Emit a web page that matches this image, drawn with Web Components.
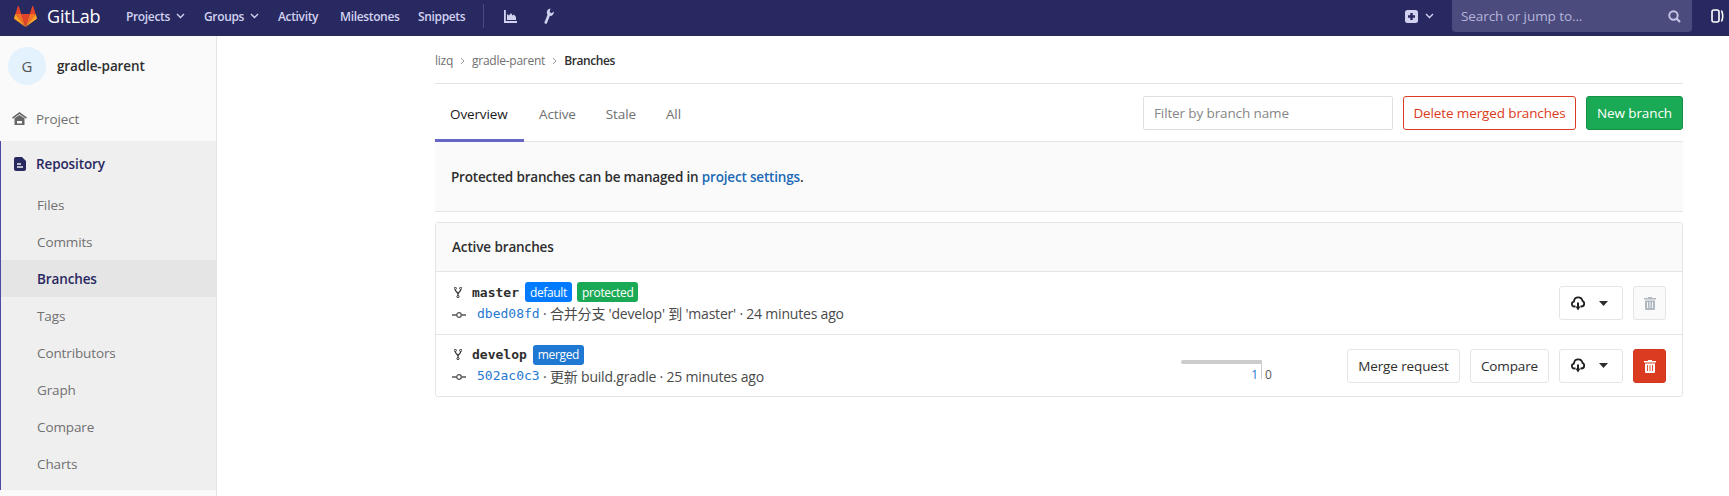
<!DOCTYPE html>
<html lang="en">
<head>
<meta charset="UTF-8">
<title>Branches · gradle-parent</title>
<style>
  html, body { margin: 0; height: 496px; overflow: hidden; background: #fff; }
  body { font: 13.500px "Open Sans", "Noto Sans CJK SC", sans-serif; letter-spacing: -.12px; color: #2e2e2e; }
</style>
</head>
<body>
<gl-page>
  <gl-navbar slot="nav"></gl-navbar>
  <gl-sidebar slot="side"></gl-sidebar>
  <gl-crumbs></gl-crumbs>
  <gl-tabs></gl-tabs>
  <gl-info>Protected branches can be managed in <a>project settings</a>.</gl-info>
  <gl-card>
    <span slot="title">Active branches</span>
    <gl-branch name="master" sha="dbed08fd" msg="合并分支 'develop' 到 'master' · 24 minutes ago">
      <gl-badge slot="badges" color="#007bff">default</gl-badge>
      <gl-badge slot="badges" color="#1aaa55">protected</gl-badge>
      <gl-button slot="actions" kind="cloud"></gl-button>
      <gl-button slot="actions" kind="trash-off"></gl-button>
    </gl-branch>
    <gl-branch name="develop" sha="502ac0c3" msg="更新 build.gradle · 25 minutes ago">
      <gl-badge slot="badges" color="#1f78d1">merged</gl-badge>
      <gl-diverge slot="graph"></gl-diverge>
      <gl-button slot="actions" style="width:113px">Merge request</gl-button>
      <gl-button slot="actions" style="width:79px">Compare</gl-button>
      <gl-button slot="actions" kind="cloud"></gl-button>
      <gl-button slot="actions" kind="trash"></gl-button>
    </gl-branch>
  </gl-card>
</gl-page>

<script>
  // shared icon markup
  const icons = {
    chev: '<svg width="9" height="6" viewBox="0 0 9 6"><path d="M1 1l3.500 3.500L8 1" fill="none" stroke="currentColor" stroke-width="1.400"/></svg>',
    cloud: '<svg width="14" height="15" viewBox="0 0 14 15"><path d="M4.500 10.500H3.300C1.800 10.500.9 9.400.9 8.100c0-1.300.9-2.300 2-2.500C3.100 3 5 1.300 7.200 1.300c2.200 0 3.900 1.500 4.300 3.500 1 .4 1.700 1.500 1.700 2.700 0 1.600-1.200 3-2.900 3H9.500" fill="none" stroke="#1f1f1f" stroke-width="1.800"/><path d="M7 6.500v5" stroke="#1f1f1f" stroke-width="2"/><path d="M4.500 10.500h5L7 14.500z" fill="#1f1f1f"/></svg>',
    caret: '<svg width="9" height="5" viewBox="0 0 9 5"><path d="M0 0h9L4.500 5z" fill="#2e2e2e"/></svg>',
    trash: '<svg width="12" height="14" viewBox="0 0 12 14"><path d="M4 2V1h4v1h4v1.500H0V2z" fill="currentColor"/><path d="M1 4.500h10V13a1 1 0 0 1-1 1H2a1 1 0 0 1-1-1z" fill="currentColor"/><path d="M3.500 6v6M6 6v6M8.500 6v6" stroke="var(--cut)" stroke-width=".9"/></svg>'
  };

  class GlPage extends HTMLElement {
    connectedCallback() {
      this.attachShadow({ mode: 'open' }).innerHTML = `
        <style>
          :host { display: block; height: 496px; }
          .body { display: flex; height: 460px; }
          main { flex: 1; min-width: 0; padding: 0 46px 0 218px; }
        </style>
        <slot name="nav"></slot>
        <div class="body">
          <slot name="side"></slot>
          <main><slot></slot></main>
        </div>`;
    }
  }

  class GlNavbar extends HTMLElement {
    connectedCallback() {
      this.attachShadow({ mode: 'open' }).innerHTML = `
        <style>
          :host { display: flex; align-items: center; box-sizing: border-box; height: 36px; padding-bottom: 4px;
                  background: #292961; color: #d1d1f0; font: 600 12px "Open Sans", sans-serif; letter-spacing: -.35px; }
          .logo { display: flex; align-items: center; margin-left: 14px; width: 112px; color: #fff;
                  font: 400 18px "Open Sans", sans-serif; letter-spacing: -.2px; gap: 10px; }
          .items { display: flex; align-items: center; }
          a { display: flex; align-items: center; gap: 6px; white-space: nowrap; }
          .sep { width: 1px; height: 24px; background: #4a4a82; }
          .grow { flex: 1; }
          .search { display: flex; align-items: center; justify-content: space-between; box-sizing: border-box;
                    width: 240px; height: 32px; padding: 0 11px 0 9px; background: #4b4b7d;
                    border-radius: 0 0 4px 4px; color: #b5b5dc; font: 400 13.500px "Open Sans", sans-serif; letter-spacing: -.08px; }
          .ext { display: flex; margin: 0 5px 0 19px; }
        </style>
        <div class="logo">
          <svg width="23" height="23" viewBox="0 0 36 36">
            <path d="M18 34.500L24.600 14.200H11.400z" fill="#e24329"/>
            <path d="M18 34.500L11.400 14.200H2.100z" fill="#fc6d26"/>
            <path d="M2.100 14.200L.1 20.400c-.2.6 0 1.200.5 1.500L18 34.500z" fill="#fca326"/>
            <path d="M2.100 14.200h9.300L7.400 2c-.2-.6-1.100-.6-1.300 0z" fill="#e24329"/>
            <path d="M18 34.500l6.600-20.300h9.300z" fill="#fc6d26"/>
            <path d="M33.900 14.200l2 6.200c.2.6 0 1.200-.5 1.500L18 34.500z" fill="#fca326"/>
            <path d="M33.900 14.200h-9.300L28.600 2c.2-.6 1.100-.6 1.300 0z" fill="#e24329"/>
          </svg>
          <span>GitLab</span>
        </div>
        <div class="items">
          <a style="width:78px">Projects ${icons.chev}</a>
          <a style="width:74px">Groups ${icons.chev}</a>
          <a style="width:62px">Activity</a>
          <a style="width:78px">Milestones</a>
          <a style="width:65px">Snippets</a>
          <div class="sep"></div>
          <svg style="margin-left:20px" width="13" height="13" viewBox="0 0 13 13"><path d="M0 0h1.800v11H13v2H0z" fill="#d1d1f0"/><path d="M3 10V4l2 1.500L7 3l1.500 2.500L10 4.500 12 7v3z" fill="#d1d1f0"/></svg>
          <svg style="margin-left:26px" width="12" height="16" viewBox="0 0 12 16"><path d="M7.500.5C5 .7 3.600 2.600 3.800 4.800c.1 1 .5 1.800 1.200 2.500l3.200.6c1.700-.6 2.800-2.300 2.700-4.300L8.500 5.200 6.600 4z" fill="#d1d1f0"/><path d="M2.800 14.500L5.800 7" stroke="#d1d1f0" stroke-width="2.600" stroke-linecap="round"/></svg>
        </div>
        <div class="grow"></div>
        <svg width="13" height="13" viewBox="0 0 13 13"><rect width="13" height="13" rx="2.500" fill="#d1d1f0"/><path d="M6.500 3v7M3 6.500h7" stroke="#292961" stroke-width="2.400"/></svg>
        <span style="display:flex;margin:0 18px 0 7px">${icons.chev}</span>
        <div class="search">
          <span>Search or jump to...</span>
          <svg width="13" height="13" viewBox="0 0 13 13"><circle cx="5.500" cy="5.500" r="4.200" fill="none" stroke="#c4c4e6" stroke-width="2"/><path d="M8.500 8.500l3.500 3.500" stroke="#c4c4e6" stroke-width="2.200"/></svg>
        </div>
        <div class="ext">
          <svg width="13" height="14" viewBox="0 0 13 14"><rect x="1" y="1" width="7" height="12" rx="2" fill="none" stroke="#fff" stroke-width="1.600"/><path d="M10.500 1.500c1.600 3.500 1.600 7.500 0 11" fill="none" stroke="#fff" stroke-width="1.600"/></svg>
        </div>`;
    }
  }

  class GlSideItem extends HTMLElement {
    connectedCallback() {
      this.attachShadow({ mode: 'open' }).innerHTML = `
        <style>
          :host { display: flex; align-items: center; height: 37px; padding-left: 36px; color: #707070; }
          :host([active]) { background: #e5e5e5; color: #292961; font-weight: 600; }
        </style>
        <slot></slot>`;
    }
  }

  class GlSidebar extends HTMLElement {
    connectedCallback() {
      this.attachShadow({ mode: 'open' }).innerHTML = `
        <style>
          :host { display: block; box-sizing: border-box; flex: none; width: 217px; height: 460px;
                  background: #fafafa; border-right: 1px solid #e5e5e5; }
          .head { display: flex; align-items: flex-start; gap: 11px; height: 63px; padding: 11px 0 0 8px; box-sizing: border-box; }
          .avatar { display: flex; align-items: center; justify-content: center; width: 38px; height: 38px;
                    border-radius: 50%; background: #e3f2fd; color: #555; font-size: 15px; }
          .name { font-weight: 600; color: #2e2e2e; line-height: 38px; }
          .project { display: flex; align-items: center; gap: 9px; height: 42px; padding: 0 0 3px 12px; box-sizing: border-box; color: #707070; }
          .repo { background: #efefef; border-left: 1px solid #4b4ba3; height: 349px; box-sizing: border-box; }
          .title { display: flex; align-items: center; gap: 10px; height: 45px; padding-left: 13px; color: #292961; font-weight: 600; }
        </style>
        <div class="head"><div class="avatar">G</div><div class="name">gradle-parent</div></div>
        <div class="project">
          <svg width="15" height="13" viewBox="0 0 15 13"><path d="M7.500 0L15 5.500l-1 1.200-6.500-4.800L1 6.700 0 5.500z" fill="#666"/><path d="M2.500 6.300L7.500 3l5 3.300V13h-10zM5 9v2.500h5V9z" fill="#666" fill-rule="evenodd"/></svg>
          <span>Project</span>
        </div>
        <div class="repo">
          <div class="title">
            <svg width="12" height="14" viewBox="0 0 12 14"><path d="M2 0h6l4 4v8a2 2 0 0 1-2 2H2a2 2 0 0 1-2-2V2a2 2 0 0 1 2-2z" fill="#292961"/><path d="M3 7h4M3 10h6" stroke="#efefef" stroke-width="1.300"/></svg>
            <span>Repository</span>
          </div>
          <gl-side-item>Files</gl-side-item>
          <gl-side-item>Commits</gl-side-item>
          <gl-side-item active>Branches</gl-side-item>
          <gl-side-item>Tags</gl-side-item>
          <gl-side-item>Contributors</gl-side-item>
          <gl-side-item>Graph</gl-side-item>
          <gl-side-item>Compare</gl-side-item>
          <gl-side-item>Charts</gl-side-item>
        </div>`;
    }
  }

  class GlCrumbs extends HTMLElement {
    connectedCallback() {
      const gt = '<svg width="5" height="8" viewBox="0 0 5 8"><path d="M1 1l3 3-3 3" fill="none" stroke="#999" stroke-width="1"/></svg>';
      this.attachShadow({ mode: 'open' }).innerHTML = `
        <style>
          :host { display: flex; align-items: center; gap: 7px; height: 48px; padding-top: 2px; box-sizing: border-box;
                  border-bottom: 1px solid #e5e5e5; font-size: 12px; letter-spacing: -.25px; color: #707070; }
          b { font-weight: 600; color: #2e2e2e; letter-spacing: -.4px; }
        </style>
        <span>lizq</span>${gt}<span>gradle-parent</span>${gt}<b>Branches</b>`;
    }
  }

  class GlTabs extends HTMLElement {
    connectedCallback() {
      this.attachShadow({ mode: 'open' }).innerHTML = `
        <style>
          :host { display: flex; align-items: stretch; height: 58px; box-sizing: border-box; border-bottom: 1px solid #e5e5e5; }
          a { display: flex; align-items: center; padding: 2px 15px 0; color: #707070; margin-bottom: -1px; }
          a.on { color: #1a1a1a; font-weight: 500; width: 59px; border-bottom: 3px solid #6666c4; padding-top: 5px; box-sizing: content-box; }
          .grow { flex: 1; }
          .tools { display: flex; align-items: center; gap: 10px; }
          .filter { box-sizing: border-box; width: 250px; height: 34px; display: flex; align-items: center; padding-left: 10px;
                    border: 1px solid #dfdfdf; border-radius: 2px; color: #868686; }
        </style>
        <a class="on">Overview</a><a>Active</a><a>Stale</a><a>All</a>
        <div class="grow"></div>
        <div class="tools">
          <div class="filter">Filter by branch name</div>
          <gl-button kind="danger" style="width:173px">Delete merged branches</gl-button>
          <gl-button kind="success" style="width:97px">New branch</gl-button>
        </div>`;
    }
  }

  class GlInfo extends HTMLElement {
    connectedCallback() {
      this.attachShadow({ mode: 'open' }).innerHTML = `
        <style>
          :host { display: flex; align-items: center; height: 69px; padding-left: 16px; background: #fafafa; letter-spacing: -.18px;
                  border-bottom: 1px solid #e5e5e5; font-weight: 600; color: #2e2e2e; margin-bottom: 10px; }
          ::slotted(a) { color: #1b69b6; }
        </style>
        <div><slot></slot></div>`;
    }
  }

  class GlCard extends HTMLElement {
    connectedCallback() {
      this.attachShadow({ mode: 'open' }).innerHTML = `
        <style>
          :host { display: block; border: 1px solid #e5e5e5; border-radius: 3px; overflow: hidden; }
          header { display: flex; align-items: center; height: 48px; padding-left: 16px; background: #fafafa;
                   font-weight: 600; color: #2e2e2e; }
        </style>
        <header><slot name="title"></slot></header>
        <slot></slot>`;
    }
  }

  class GlBadge extends HTMLElement {
    connectedCallback() {
      this.attachShadow({ mode: 'open' }).innerHTML = `
        <style>
          :host { display: inline-flex; align-items: center; height: 20px; padding: 0 5px; border-radius: 3px; color: #fff;
                  font-size: 12px; letter-spacing: -.35px; background: ${this.getAttribute('color')}; }
        </style>
        <slot></slot>`;
    }
  }

  class GlButton extends HTMLElement {
    connectedCallback() {
      const kind = this.getAttribute('kind');
      let inner = '<slot></slot>';
      if (kind === 'cloud') inner = `${icons.cloud}<span style="width:14px"></span>${icons.caret}`;
      if (kind === 'trash' || kind === 'trash-off') inner = icons.trash;
      this.attachShadow({ mode: 'open' }).innerHTML = `
        <style>
          :host { display: flex; align-items: center; justify-content: center; box-sizing: border-box; height: 34px; flex: none;
                  background: #fff; border: 1px solid #e5e5e5; border-radius: 3px; color: #2e2e2e; white-space: nowrap; }
          :host([kind=cloud]) { width: 64px; padding-right: 4px; }
          :host([kind=danger]) { border-color: #db3b21; color: #db3b21; }
          :host([kind=success]) { background: #1aaa55; border-color: #168f48; color: #fff; }
          :host([kind=trash]) { width: 33px; background: #db3b21; border-color: #d03720; color: #fff; --cut: #db3b21; }
          :host([kind=trash-off]) { width: 33px; background: #fafafa; color: #b0b8c2; --cut: #fafafa; }
        </style>
        ${inner}`;
    }
  }

  class GlDiverge extends HTMLElement {
    connectedCallback() {
      this.attachShadow({ mode: 'open' }).innerHTML = `
        <style>
          :host { display: grid; grid-template-columns: 80px 1px 22px; height: 20px; font-size: 12px; }
          .left { display: flex; flex-direction: column; align-items: flex-end; }
          .bar { width: 100%; height: 4px; background: #ccc; border-radius: 2px 0 0 2px; }
          .line { background: #ccc; height: 19px; }
          .n { padding: 4px 3px 0 0; color: #1f78d1; line-height: 14px; }
          .r { padding: 8px 0 0 3px; line-height: 14px; color: #555; }
        </style>
        <div class="left"><div class="bar"></div><div class="n">1</div></div>
        <div class="line"></div>
        <div class="r">0</div>`;
    }
  }

  class GlBranch extends HTMLElement {
    connectedCallback() {
      this.attachShadow({ mode: 'open' }).innerHTML = `
        <style>
          :host { display: flex; align-items: center; box-sizing: border-box; height: 63px; padding: 0 16px;
                  border-top: 1px solid #e5e5e5; background: #fff; }
          :host(:last-child) { height: 62px; }
          .info { flex: 1; min-width: 0; }
          .l1, .l2 { display: flex; align-items: center; }
          .l1 { height: 21px; gap: 6px; margin-top: -1px; }
          .l2 { height: 21px; color: #4a4a4a; white-space: pre; font-size: 14px; letter-spacing: -.2px; }
          .name { font: 700 13px "DejaVu Sans Mono", "Liberation Mono", monospace; letter-spacing: 0; color: #2e2e2e; margin: 0 0 0 4px; }
          .sha { font: 13px "DejaVu Sans Mono", "Liberation Mono", monospace; letter-spacing: 0; color: #1f78d1; margin: 0 0 0 11px; }
          .graph { display: flex; margin-right: 63px; margin-top: 8px; }
          .actions { display: flex; align-items: center; gap: 10px; }
        </style>
        <div class="info">
          <div class="l1">
            <svg style="margin-left:2px" width="8" height="11" viewBox="0 0 8 11"><circle cx="1.300" cy="1.400" r="1.100" fill="none" stroke="#333" stroke-width="1"/><circle cx="6.700" cy="1.400" r="1.100" fill="none" stroke="#333" stroke-width="1"/><circle cx="4" cy="9.600" r="1.100" fill="none" stroke="#333" stroke-width="1"/><path d="M1.300 2.600C1.300 5 4 5 4 7.200v1.200M6.700 2.600C6.700 5 4 5 4 7.200" fill="none" stroke="#333" stroke-width="1.200"/></svg>
            <span class="name"></span>
            <slot name="badges" style="display:flex;gap:5px"></slot>
          </div>
          <div class="l2">
            <svg width="14" height="8" viewBox="0 0 14 8" style="margin-top:3px"><circle cx="7" cy="4" r="2.300" fill="none" stroke="#555" stroke-width="1.300"/><path d="M0 4h4.500M9.500 4H14" stroke="#555" stroke-width="1.300"/></svg>
            <span class="sha"></span><span class="msg"></span>
          </div>
        </div>
        <div class="graph"><slot name="graph"></slot></div>
        <div class="actions"><slot name="actions"></slot></div>`;
      const s = this.shadowRoot;
      s.querySelector('.name').textContent = this.getAttribute('name');
      s.querySelector('.sha').textContent = this.getAttribute('sha');
      s.querySelector('.msg').textContent = ' · ' + this.getAttribute('msg');
    }
  }

  customElements.define('gl-page', GlPage);
  customElements.define('gl-navbar', GlNavbar);
  customElements.define('gl-side-item', GlSideItem);
  customElements.define('gl-sidebar', GlSidebar);
  customElements.define('gl-crumbs', GlCrumbs);
  customElements.define('gl-tabs', GlTabs);
  customElements.define('gl-info', GlInfo);
  customElements.define('gl-card', GlCard);
  customElements.define('gl-badge', GlBadge);
  customElements.define('gl-button', GlButton);
  customElements.define('gl-diverge', GlDiverge);
  customElements.define('gl-branch', GlBranch);
</script>
</body>
</html>
